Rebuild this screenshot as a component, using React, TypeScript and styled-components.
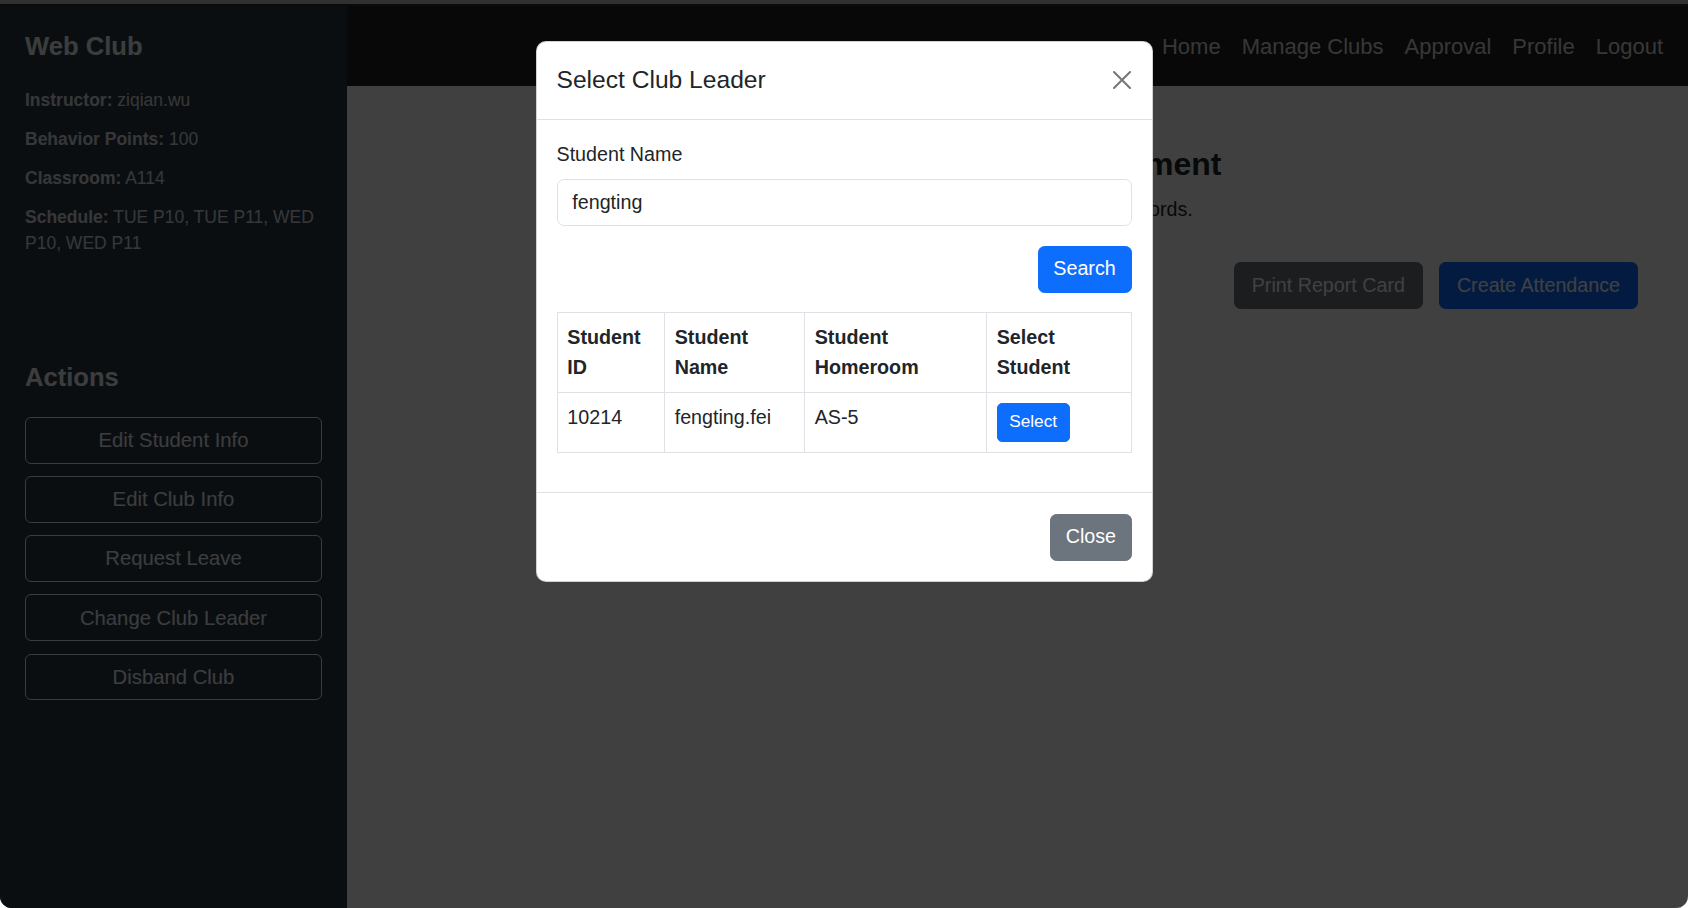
import React from "react";
import styled, { createGlobalStyle, css } from "styled-components";

const GlobalStyle = createGlobalStyle`
  html, body {
    margin: 0;
    padding: 0;
    background: #ffffff;
  }
  body {
    font-family: "Liberation Sans", Arial, Helvetica, sans-serif;
    color: #212529;
  }
  *, *::before, *::after {
    box-sizing: border-box;
  }
`;

const Window = styled.div`
  width: 1688px;
  height: 908px;
  display: flex;
  flex-direction: column;
  border-radius: 0 0 12px 12px;
  overflow: hidden;
  background: #2a2a2a;
`;

const TopEdge = styled.div`
  flex: none;
  height: 6px;
  background: #303030;
  border-bottom: 2px solid #0b0b0b;
`;

const Viewport = styled.div`
  position: relative;
  flex: 1;
  display: flex;
  min-height: 0;
`;

/* ---------- Sidebar ---------- */

const Sidebar = styled.aside`
  flex: none;
  width: 347px;
  background: #2f3a45;
  padding: 25px 25px;
  display: flex;
  flex-direction: column;
`;

const Brand = styled.h5`
  margin: 0 0 26px;
  font-size: 25.6px;
  line-height: 1.2;
  font-weight: 700;
  color: #eef1f4;
`;

const InfoLine = styled.p`
  margin: 0 0 13.3px;
  font-size: 17.5px;
  line-height: 25.9px;
  color: #d6dce3;
  strong {
    font-weight: 700;
  }
`;

const SectionTitle = styled.h4`
  margin: 91.8px 0 24px;
  font-size: 25.6px;
  line-height: 1.2;
  font-weight: 700;
  color: #eef1f4;
`;

const ActionList = styled.div`
  display: flex;
  flex-direction: column;
  gap: 12.4px;
`;

const OutlineButton = styled.button`
  width: 100%;
  height: 46.8px;
  background: transparent;
  border: 1px solid #e4e9ee;
  border-radius: 6px;
  color: #eef2f6;
  font-family: inherit;
  font-size: 20.3px;
  line-height: 1.5;
  padding: 0;
  cursor: pointer;
`;

/* ---------- Main ---------- */

const Main = styled.main`
  flex: 1;
  display: flex;
  flex-direction: column;
  background: #ffffff;
  min-width: 0;
`;

const NavBar = styled.nav`
  flex: none;
  height: 80px;
  background: #212121;
  display: flex;
  justify-content: flex-end;
  align-items: center;
  padding-right: 14.5px;
`;

const NavLink = styled.a`
  padding: 0 10.5px;
  font-size: 22px;
  line-height: 1.5;
  color: #dcdcdc;
  text-decoration: none;
`;

const Content = styled.section`
  flex: 1;
  padding: 58.7px 50px 0 523px;
  background: #ffffff;
`;

const PageTitle = styled.h2`
  margin: 0 0 12.3px;
  font-size: 32px;
  line-height: 1.2;
  font-weight: 700;
  color: #212529;
  white-space: nowrap;
`;

const Lead = styled.p`
  margin: 0;
  font-size: 19.7px;
  line-height: 1.5;
  color: #212529;
  white-space: nowrap;
`;

const ToolRow = styled.div`
  display: flex;
  justify-content: flex-end;
  gap: 16px;
  margin-top: 37px;
`;

type Variant = "primary" | "secondary";
type Size = "sm" | "md" | "wide";

const variantStyles: Record<Variant, ReturnType<typeof css>> = {
  primary: css`
    background: #0d6efd;
    border-color: #0d6efd;
  `,
  secondary: css`
    background: #6c757d;
    border-color: #6c757d;
  `,
};

const sizeStyles: Record<Size, ReturnType<typeof css>> = {
  sm: css`
    font-size: 17.25px;
    padding: 5.5px 11.5px;
    border-radius: 5px;
  `,
  md: css`
    font-size: 19.7px;
    padding: 7.6px 14.8px;
    border-radius: 6.5px;
  `,
  wide: css`
    font-size: 19.7px;
    padding: 7.6px 17px;
    border-radius: 6.5px;
  `,
};

const Button = styled.button<{ $variant: Variant; $size?: Size }>`
  font-family: inherit;
  color: #ffffff;
  border: 1px solid transparent;
  cursor: pointer;
  line-height: 1.5;
  ${(p) => sizeStyles[p.$size ?? "md"]}
  ${(p) => variantStyles[p.$variant]}
`;

/* ---------- Modal ---------- */

const Backdrop = styled.div`
  position: absolute;
  inset: 0;
  background: rgba(0, 0, 0, 0.75);
`;

const ModalLayer = styled.div`
  position: absolute;
  inset: 0;
  display: flex;
  justify-content: center;
  align-items: flex-start;
  padding-top: 35px;
`;

const ModalCard = styled.div`
  width: 617px;
  background: #ffffff;
  border-radius: 10px;
  border: 1px solid rgba(0, 0, 0, 0.175);
  display: flex;
  flex-direction: column;
`;

const ModalHeader = styled.div`
  display: flex;
  align-items: center;
  justify-content: space-between;
  padding: 20px;
  border-bottom: 1px solid #dee2e6;
`;

const ModalTitle = styled.h5`
  margin: 0;
  font-size: 24.6px;
  line-height: 1.5;
  font-weight: 500;
  color: #212529;
`;

const CloseIcon = styled.button`
  width: 22px;
  height: 22px;
  padding: 0;
  margin-right: -1px;
  border: 0;
  background: transparent;
  display: flex;
  align-items: center;
  justify-content: center;
  cursor: pointer;
`;

const ModalBody = styled.div`
  padding: 20px;
`;

const FieldLabel = styled.label`
  display: block;
  margin-bottom: 9.9px;
  font-size: 19.7px;
  line-height: 1.5;
  color: #212529;
`;

const TextInput = styled.input`
  display: block;
  width: 100%;
  height: 46.8px;
  padding: 7.4px 14.8px;
  font-family: inherit;
  font-size: 19.7px;
  line-height: 1.5;
  color: #212529;
  background: #ffffff;
  border: 1px solid #dee2e6;
  border-radius: 7px;
  outline: none;
`;

const SearchRow = styled.div`
  display: flex;
  justify-content: flex-end;
  margin-top: 19.7px;
`;

const ResultTable = styled.table`
  width: 100%;
  margin: 19.7px 0;
  border-collapse: collapse;
  table-layout: fixed;
  color: #212529;
  font-size: 19.7px;
  line-height: 1.5;
`;

const HeadCell = styled.th`
  text-align: left;
  font-weight: 700;
  vertical-align: bottom;
  padding: 9.9px 9.86px;
  border: 1px solid #dee2e6;
`;

const Cell = styled.td`
  vertical-align: top;
  padding: 9.86px;
  border: 1px solid #dee2e6;
`;

const ModalFooter = styled.div`
  display: flex;
  justify-content: flex-end;
  padding: 15.5px 14.8px;
  border-top: 1px solid #dee2e6;
  & > button {
    margin: 4.9px;
  }
`;

const XIcon = () => (
  <svg width="20" height="20" viewBox="0 0 20 20" aria-hidden="true">
    <path
      d="M2 2 L18 18 M18 2 L2 18"
      stroke="#777777"
      strokeWidth="2.1"
      strokeLinecap="round"
      fill="none"
    />
  </svg>
);

const actions = [
  "Edit Student Info",
  "Edit Club Info",
  "Request Leave",
  "Change Club Leader",
  "Disband Club",
];

const navItems = ["Home", "Manage Clubs", "Approval", "Profile", "Logout"];

export default function App() {
  return (
    <>
      <GlobalStyle />
      <Window>
        <TopEdge />
        <Viewport>
          <Sidebar>
            <Brand>Web Club</Brand>
            <InfoLine>
              <strong>Instructor:</strong> ziqian.wu
            </InfoLine>
            <InfoLine>
              <strong>Behavior Points:</strong> 100
            </InfoLine>
            <InfoLine>
              <strong>Classroom:</strong> A114
            </InfoLine>
            <InfoLine>
              <strong>Schedule:</strong> TUE P10, TUE P11, WED P10, WED P11
            </InfoLine>
            <SectionTitle>Actions</SectionTitle>
            <ActionList>
              {actions.map((a) => (
                <OutlineButton key={a}>{a}</OutlineButton>
              ))}
            </ActionList>
          </Sidebar>
          <Main>
            <NavBar>
              {navItems.map((n) => (
                <NavLink key={n} href="#">
                  {n}
                </NavLink>
              ))}
            </NavBar>
            <Content>
              <PageTitle>Web Club Management</PageTitle>
              <Lead>Manage team members and records.</Lead>
              <ToolRow>
                <Button $variant="secondary" $size="wide">
                  Print Report Card
                </Button>
                <Button $variant="primary" $size="wide">
                  Create Attendance
                </Button>
              </ToolRow>
            </Content>
          </Main>

          <Backdrop />
          <ModalLayer>
            <ModalCard role="dialog" aria-modal="true">
              <ModalHeader>
                <ModalTitle>Select Club Leader</ModalTitle>
                <CloseIcon aria-label="Close">
                  <XIcon />
                </CloseIcon>
              </ModalHeader>
              <ModalBody>
                <FieldLabel htmlFor="student-name">Student Name</FieldLabel>
                <TextInput id="student-name" defaultValue="fengting" />
                <SearchRow>
                  <Button $variant="primary">Search</Button>
                </SearchRow>
                <ResultTable>
                  <colgroup>
                    <col style={{ width: "18.7%" }} />
                    <col style={{ width: "24.4%" }} />
                    <col style={{ width: "31.7%" }} />
                    <col style={{ width: "25.2%" }} />
                  </colgroup>
                  <thead>
                    <tr>
                      <HeadCell>Student ID</HeadCell>
                      <HeadCell>Student Name</HeadCell>
                      <HeadCell>Student Homeroom</HeadCell>
                      <HeadCell>Select Student</HeadCell>
                    </tr>
                  </thead>
                  <tbody>
                    <tr>
                      <Cell>10214</Cell>
                      <Cell>fengting.fei</Cell>
                      <Cell>AS-5</Cell>
                      <Cell>
                        <Button $variant="primary" $size="sm">
                          Select
                        </Button>
                      </Cell>
                    </tr>
                  </tbody>
                </ResultTable>
              </ModalBody>
              <ModalFooter>
                <Button $variant="secondary">Close</Button>
              </ModalFooter>
            </ModalCard>
          </ModalLayer>
        </Viewport>
      </Window>
    </>
  );
}
